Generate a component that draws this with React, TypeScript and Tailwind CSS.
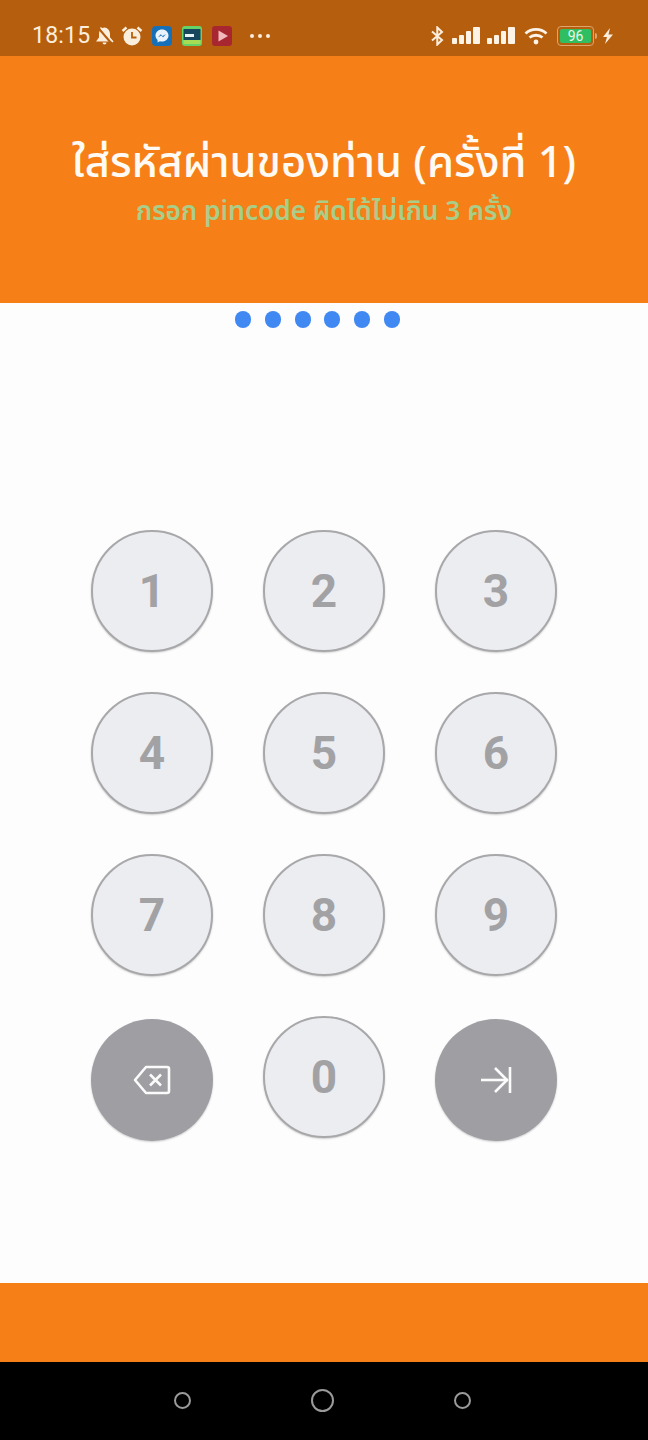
const sans = "font-['Roboto','Liberation_Sans',sans-serif]";

function Key({ label }: { label: string }) {
  return (
    <div className="w-[122px] h-[122px] rounded-full bg-[#ecedf1] border-2 border-[#a8a8aa] shadow-[0_1px_2px_rgba(0,0,0,0.2)] flex items-center justify-center">
      <span className="text-[46px] leading-none font-bold text-[#a2a2a5]">{label}</span>
    </div>
  );
}

function ActionKey({ children }: { children: React.ReactNode }) {
  return (
    <div className="w-[122px] h-[122px] mt-[3px] rounded-full bg-[#9f9ea2] shadow-[0_1px_2px_rgba(0,0,0,0.2)] flex items-center justify-center">
      {children}
    </div>
  );
}

function Signal() {
  return (
    <svg width="28" height="18" viewBox="0 0 28 18" fill="#fdf3e6">
      <rect x="0" y="11" width="5" height="6" rx="1" />
      <rect x="7" y="8" width="5" height="9" rx="1" />
      <rect x="14" y="4" width="5" height="13" rx="1" />
      <rect x="21" y="0" width="7" height="17" rx="1" />
    </svg>
  );
}

export default function App() {
  return (
    <div className={`w-[648px] h-[1440px] flex flex-col bg-[#fefdfe] overflow-hidden ${sans}`}>
      {/* Status bar */}
      <div className="h-[56px] bg-[#b55f0e] flex items-center pl-[32px] pt-[15px] pr-[34px] text-[#fbeedd] shrink-0">
        <span className="text-[23px] leading-none w-[62px] tracking-[0.2px]">18:15</span>
        <svg width="19" height="20" viewBox="0 0 19 20" fill="#fbeedd" className="ml-[1px]">
          <path d="M1 15.500L4 11.500V8C4 4.500 6.500 1.500 9.500 1.500S15 4.500 15 8V11.500L18 15.500z" />
          <path d="M7.500 16.500h4a2 2 0 0 1-4 0z" />
          <path d="M3 1.500L17 18" stroke="#b55f0e" strokeWidth="2.200" />
          <path d="M5.500 1.500L18 16" stroke="#fbeedd" strokeWidth="1.400" />
        </svg>
        <svg width="22" height="22" viewBox="0 0 22 22" className="ml-[7px]">
          <circle cx="11" cy="12" r="8.500" fill="#fbeedd" />
          <path d="M11 7V12.500H15.500" stroke="#b55f0e" strokeWidth="1.800" fill="none" />
          <path d="M1.500 6L5.500 2.500M20.500 6L16.500 2.500" stroke="#fbeedd" strokeWidth="2.400" />
        </svg>
        <svg width="20" height="20" viewBox="0 0 20 20" className="ml-[9px]">
          <rect width="20" height="20" rx="4" fill="#1670b8" />
          <path d="M10 3.500c-3.800 0-6.500 2.700-6.500 6 0 1.800.8 3.300 2.100 4.400V16.500l2.300-1.300c.6.200 1.300.3 2.100.3 3.800 0 6.500-2.700 6.500-6s-2.700-6-6.500-6z" fill="#eaf3fb" />
          <path d="M5.800 11.500l3-3.300 1.800 1.700 3.500-2-3 3.300-1.800-1.700z" fill="#1670b8" />
        </svg>
        <svg width="20" height="20" viewBox="0 0 20 20" className="ml-[10px]">
          <rect width="20" height="20" rx="3" fill="#63d36a" />
          <rect x="1.500" y="3" width="17" height="11" fill="#17475f" />
          <rect x="3" y="8" width="9" height="3" fill="#e9f4f4" />
          <rect x="1.500" y="14" width="17" height="4" fill="#a7dc55" />
        </svg>
        <svg width="20" height="20" viewBox="0 0 20 20" className="ml-[10px]">
          <rect width="20" height="20" rx="3" fill="#a8262f" />
          <path d="M6.500 4.500L16 10l-9.500 5.500z" fill="#f2b9bc" />
        </svg>
        <div className="ml-[18px] flex gap-[4px]">
          <span className="w-[4px] h-[4px] rounded-full bg-[#fbeedd]" />
          <span className="w-[4px] h-[4px] rounded-full bg-[#fbeedd]" />
          <span className="w-[4px] h-[4px] rounded-full bg-[#fbeedd]" />
        </div>
        <div className="ml-auto flex items-center">
          <svg width="15" height="20" viewBox="0 0 15 20" fill="none" stroke="#fbeedd" strokeWidth="2">
            <path d="M2 5.500L12 14l-4.700 4.500V1.500L12 6 2 14.500" />
          </svg>
          <div className="ml-[7px]"><Signal /></div>
          <div className="ml-[7px]"><Signal /></div>
          <svg width="24" height="18" viewBox="0 0 24 18" fill="none" stroke="#fdf3e6" strokeWidth="2.800" className="ml-[9px]">
            <path d="M1.500 6.500C7.500 1 16.500 1 22.500 6.500" />
            <path d="M5.500 10.500C9 7.500 15 7.500 18.500 10.500" />
            <circle cx="12" cy="15" r="2.400" fill="#fdf3e6" stroke="none" />
          </svg>
          <div className="ml-[9px] w-[37px] h-[20px] rounded-[4px] border border-[#dba56b] p-[2px] flex">
            <div className="flex-1 rounded-[2px] bg-[#2fbf62] text-[14px] leading-[14px] text-center text-[#eaf8ec]">96</div>
          </div>
          <div className="ml-[1px] w-[2px] h-[6px] bg-[#dba56b] rounded-r-sm" />
          <svg width="12" height="18" viewBox="0 0 12 18" fill="#fbeedd" className="ml-[5px]">
            <path d="M8 1L1 10h4l-2 7 8-9.500H6.500z" />
          </svg>
        </div>
      </div>

      {/* Header */}
      <div className="h-[247px] bg-[#f67f17] flex flex-col items-center shrink-0 pt-[82px] font-['Noto_Sans_Thai','Noto_Sans','Open_Sans',sans-serif]">
        <div className="text-[43.500px] leading-[52px] font-medium text-[#fffaf3] whitespace-nowrap">ใส่รหัสผ่านของท่าน (ครั้งที่ 1)</div>
        <div className="mt-[6px] text-[26.300px] leading-[32px] font-semibold text-[#a9ce8a] whitespace-nowrap">กรอก pincode ผิดได้ไม่เกิน 3 ครั้ง</div>
      </div>

      {/* PIN dots */}
      <div className="flex justify-center gap-[13.800px] pt-[8px] pr-[13px] shrink-0">
        {[0, 1, 2, 3, 4, 5].map((i) => (
          <span key={i} className="w-[16px] h-[17px] rounded-full bg-[#4088f2]" />
        ))}
      </div>

      {/* Keypad */}
      <div className="flex-1 pt-[202px]">
        <div className="grid grid-cols-[122px_122px_122px] gap-x-[50px] gap-y-[40px] justify-center items-start">
          {["1", "2", "3", "4", "5", "6", "7", "8", "9"].map((n) => (
            <Key key={n} label={n} />
          ))}
          <ActionKey>
            <svg width="38" height="30" viewBox="0 0 38 30" fill="none" stroke="#fbfbfb" strokeWidth="2.600" strokeLinejoin="round">
              <path d="M13 2H34a2 2 0 0 1 2 2V26a2 2 0 0 1-2 2H13L2 15z" />
              <path d="M17 9.500L28 20.500M28 9.500L17 20.500" />
            </svg>
          </ActionKey>
          <Key label="0" />
          <ActionKey>
            <svg width="32" height="28" viewBox="0 0 32 28" fill="none" stroke="#fbfbfb" strokeWidth="2.600">
              <path d="M1 14H28" />
              <path d="M15 2L27 14 15 26" />
              <path d="M30 1V27" />
            </svg>
          </ActionKey>
        </div>
      </div>

      {/* Footer */}
      <div className="h-[79px] bg-[#f67f17] shrink-0" />

      {/* Navigation */}
      <div className="h-[78px] bg-black flex items-center justify-center gap-[120px] pb-[1px] pr-[4px] shrink-0">
        <span className="w-[17px] h-[17px] rounded-full border-2 border-[#9a9a9a]" />
        <span className="w-[23px] h-[23px] rounded-full border-2 border-[#9a9a9a]" />
        <span className="w-[17px] h-[17px] rounded-full border-2 border-[#9a9a9a]" />
      </div>
    </div>
  );
}
